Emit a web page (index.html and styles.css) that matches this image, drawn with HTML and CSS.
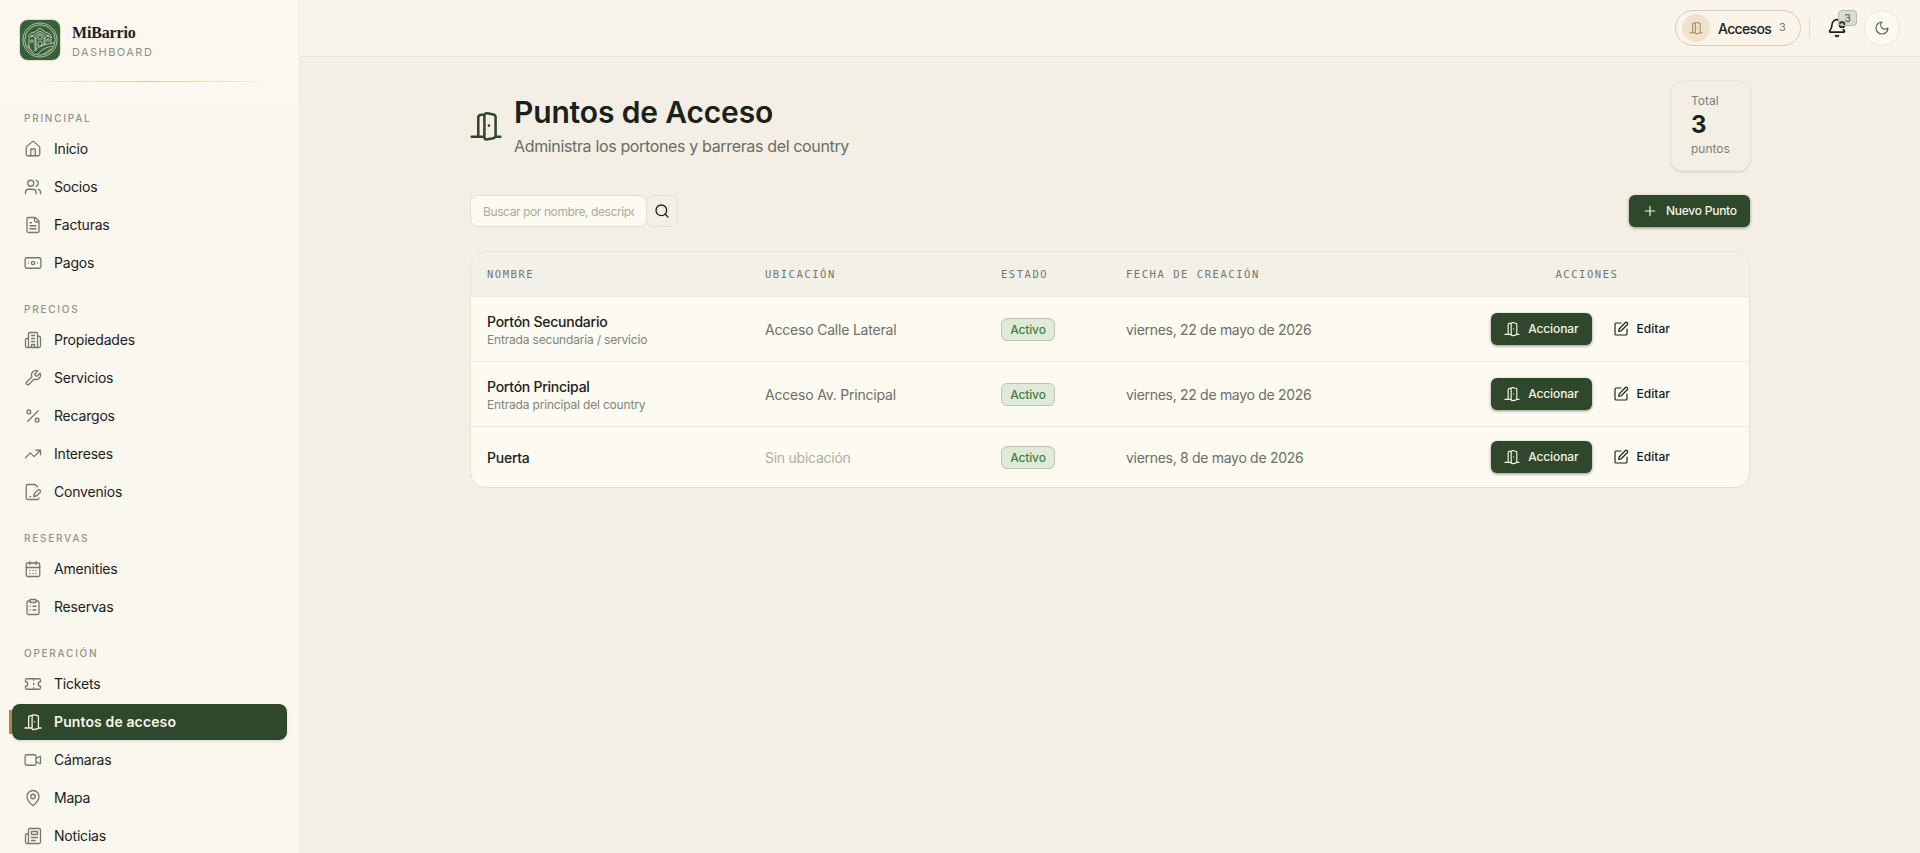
FILE: index.html
```html
<!DOCTYPE html>
<html lang="es">
<head>
<meta charset="utf-8">
<title>MiBarrio – Puntos de Acceso</title>
<link rel="stylesheet" href="styles.css">
</head>
<body>
<svg class="sprite" aria-hidden="true">
  <symbol id="door" viewBox="0 0 24 24"><path d="M1.3 20h9.4M19.2 20h3.5M6.2 20V6c0-1.600.8-2.500 2.400-2.500h2M10.800 20.600V4.300c0-1.300.9-2 2.200-1.800l4.500.8c1.100.2 1.700.9 1.700 2V19.200c0 1-.6 1.700-1.600 1.900l-4.600.9c-1.300.2-2.200-.3-2.200-1.400zM14.200 11.700v.1"/></symbol>
  <symbol id="home" viewBox="0 0 24 24"><path d="M15 21v-8a1 1 0 0 0-1-1h-4a1 1 0 0 0-1 1v8"/><path d="M3 10a2 2 0 0 1 .7-1.500l7-6a2 2 0 0 1 2.600 0l7 6A2 2 0 0 1 21 10v9a2 2 0 0 1-2 2H5a2 2 0 0 1-2-2z"/></symbol>
  <symbol id="users" viewBox="0 0 24 24"><path d="M16 21v-2a4 4 0 0 0-4-4H6a4 4 0 0 0-4 4v2M22 21v-2a4 4 0 0 0-3-3.870M16 3.130a4 4 0 0 1 0 7.750"/><circle cx="9" cy="7" r="4"/></symbol>
  <symbol id="file" viewBox="0 0 24 24"><path d="M15 2H6a2 2 0 0 0-2 2v16a2 2 0 0 0 2 2h12a2 2 0 0 0 2-2V7zM14 2v4a2 2 0 0 0 2 2h4M10 9H8M16 13H8M16 17H8"/></symbol>
  <symbol id="cash" viewBox="0 0 24 24"><rect x="1.500" y="5" width="21" height="14" rx="2"/><circle cx="12" cy="12" r="2.200"/><path d="M6 12h.01M18 12h.01"/></symbol>
  <symbol id="building" viewBox="0 0 24 24"><path d="M6 22V4a2 2 0 0 1 2-2h8a2 2 0 0 1 2 2v18zM6 10H4a2 2 0 0 0-2 2v8a2 2 0 0 0 2 2h2M18 7h2a2 2 0 0 1 2 2v11a2 2 0 0 1-2 2h-2M10 6h4M10 10h4M10 14h4M10 22v-4h4v4"/></symbol>
  <symbol id="wrench" viewBox="0 0 24 24"><path d="M14.700 6.300a1 1 0 0 0 0 1.400l1.600 1.600a1 1 0 0 0 1.400 0l3.770-3.770a6 6 0 0 1-7.940 7.940l-6.910 6.910a2.120 2.120 0 0 1-3-3l6.910-6.910a6 6 0 0 1 7.940-7.940z"/></symbol>
  <symbol id="percent" viewBox="0 0 24 24"><path d="M19 5 5 19"/><circle cx="6.500" cy="6.500" r="2.500"/><circle cx="17.500" cy="17.500" r="2.500"/></symbol>
  <symbol id="trend" viewBox="0 0 24 24"><path d="m22 7-8.500 8.500-5-5L2 17M16 7h6v6"/></symbol>
  <symbol id="filepen" viewBox="0 0 24 24"><path d="m18 5-2.400-2.400A2 2 0 0 0 14.200 2H5a2 2 0 0 0-2 2v16a2 2 0 0 0 2 2h13a2 2 0 0 0 2-2M8 18h1M18.400 9.600a2 2 0 0 1 3 3L17 17l-4 1 1-4z"/></symbol>
  <symbol id="calendar" viewBox="0 0 24 24"><rect x="3" y="4" width="18" height="18" rx="2"/><path d="M8 2v4M16 2v4M3 10h18M8 14h.01M12 14h.01M16 14h.01M8 18h.01M12 18h.01M16 18h.01"/></symbol>
  <symbol id="clipboard" viewBox="0 0 24 24"><rect x="8" y="2" width="8" height="4" rx="1"/><path d="M16 4h2a2 2 0 0 1 2 2v14a2 2 0 0 1-2 2H6a2 2 0 0 1-2-2V6a2 2 0 0 1 2-2h2M12 11h4M12 16h4M8 11h.01M8 16h.01"/></symbol>
  <symbol id="ticket" viewBox="0 0 24 24"><path d="M2 9a3 3 0 0 1 0 6v2a2 2 0 0 0 2 2h16a2 2 0 0 0 2-2v-2a3 3 0 0 1 0-6V7a2 2 0 0 0-2-2H4a2 2 0 0 0-2 2zM13 5v2M13 11v2M13 17v2"/></symbol>
  <symbol id="video" viewBox="0 0 24 24"><path d="m16 10 5.200-3a.5.5 0 0 1 .8.400v9.200a.5.5 0 0 1-.8.400L16 14"/><rect x="1.500" y="5" width="14.500" height="14" rx="2"/></symbol>
  <symbol id="pin" viewBox="0 0 24 24"><path d="M20 10c0 5-5.540 10.190-7.400 11.800a1 1 0 0 1-1.200 0C9.540 20.190 4 15 4 10a8 8 0 0 1 16 0"/><circle cx="12" cy="10" r="3"/></symbol>
  <symbol id="news" viewBox="0 0 24 24"><path d="M4 22h16a2 2 0 0 0 2-2V4a2 2 0 0 0-2-2H8a2 2 0 0 0-2 2v16a2 2 0 0 1-4 0v-9a2 2 0 0 1 2-2h2M18 14h-8M15 18h-5M10 6h8v4h-8z"/></symbol>
  <symbol id="bell" viewBox="0 0 24 24"><path d="M10.300 21a1.940 1.940 0 0 0 3.400 0M13.900 2.300A6 6 0 0 0 6 8c0 4.500-1.410 5.960-2.740 7.330A1 1 0 0 0 4 17h16a1 1 0 0 0 .74-1.670c-.4-.4-.8-.9-1.200-1.400"/><circle cx="18" cy="8" r="3"/></symbol>
  <symbol id="moon" viewBox="0 0 24 24"><path d="M12 3a6 6 0 0 0 9 9 9 9 0 1 1-9-9"/></symbol>
  <symbol id="search" viewBox="0 0 24 24"><circle cx="11" cy="11" r="8"/><path d="m21 21-4.300-4.300"/></symbol>
  <symbol id="plus" viewBox="0 0 24 24"><path d="M5 12h14M12 5v14"/></symbol>
  <symbol id="edit" viewBox="0 0 24 24"><path d="M12 3H5a2 2 0 0 0-2 2v14a2 2 0 0 0 2 2h14a2 2 0 0 0 2-2v-7M18.400 2.600a2.100 2.100 0 0 1 3 3L12.400 14.600 8.500 15.500l.9-3.900z"/></symbol>
</svg>

<div class="app">
  <aside class="sidebar">
    <div class="brand">
      <svg class="logo" viewBox="0 0 40 40"><circle cx="20" cy="20" r="17"/><circle cx="20" cy="20" r="15.200"/><path d="M8 17l3-4 4-1 5-4 5 4 5 2 2 4M11 17l9-6 9 6M16 31V16l4-3 4 3v9M9 28V18l3-3 3 3v11M25 25v-7l3-3 3 3v5M18 19v-2a2 2 0 0 1 4 0v2zM18 26v-3a2 2 0 0 1 4 0v3zM11 23v-3h2v3M27 22v-3h2v3M13 32c4-5 11-8 21-9M18 34c3-4 8-7 15-8M24 34c2-2 5-4 8-5M7 25l5 6"/></svg>
      <div class="brand-text"><span class="brand-name">MiBarrio</span><span class="brand-sub">DASHBOARD</span></div>
    </div>
    <nav class="nav">
      <section class="group"><h2 class="group-title">PRINCIPAL</h2>
        <a class="item"><svg class="icon"><use href="#home"/></svg><span>Inicio</span></a>
        <a class="item"><svg class="icon"><use href="#users"/></svg><span>Socios</span></a>
        <a class="item"><svg class="icon"><use href="#file"/></svg><span>Facturas</span></a>
        <a class="item"><svg class="icon"><use href="#cash"/></svg><span>Pagos</span></a>
      </section>
      <section class="group"><h2 class="group-title">PRECIOS</h2>
        <a class="item"><svg class="icon"><use href="#building"/></svg><span>Propiedades</span></a>
        <a class="item"><svg class="icon"><use href="#wrench"/></svg><span>Servicios</span></a>
        <a class="item"><svg class="icon"><use href="#percent"/></svg><span>Recargos</span></a>
        <a class="item"><svg class="icon"><use href="#trend"/></svg><span>Intereses</span></a>
        <a class="item"><svg class="icon"><use href="#filepen"/></svg><span>Convenios</span></a>
      </section>
      <section class="group"><h2 class="group-title">RESERVAS</h2>
        <a class="item"><svg class="icon"><use href="#calendar"/></svg><span>Amenities</span></a>
        <a class="item"><svg class="icon"><use href="#clipboard"/></svg><span>Reservas</span></a>
      </section>
      <section class="group"><h2 class="group-title">OPERACIÓN</h2>
        <a class="item"><svg class="icon"><use href="#ticket"/></svg><span>Tickets</span></a>
        <a class="item active"><svg class="icon"><use href="#door"/></svg><span>Puntos de acceso</span></a>
        <a class="item"><svg class="icon"><use href="#video"/></svg><span>Cámaras</span></a>
        <a class="item"><svg class="icon"><use href="#pin"/></svg><span>Mapa</span></a>
        <a class="item"><svg class="icon"><use href="#news"/></svg><span>Noticias</span></a>
      </section>
    </nav>
  </aside>

  <div class="content">
    <header class="topbar">
      <div class="pill"><span class="pill-icon"><svg class="icon"><use href="#door"/></svg></span><span class="pill-label">Accesos</span><span class="pill-count">3</span></div>
      <span class="divider"></span>
      <div class="bell"><svg class="icon"><use href="#bell"/></svg><span class="bell-badge">3</span></div>
      <div class="theme"><svg class="icon"><use href="#moon"/></svg></div>
    </header>

    <main class="main">
      <div class="page-head">
        <div class="heading">
          <svg class="icon heading-icon"><use href="#door"/></svg>
          <div><h1 class="title">Puntos de Acceso</h1><p class="subtitle">Administra los portones y barreras del country</p></div>
        </div>
        <div class="total"><span>Total</span><strong>3</strong><span>puntos</span></div>
      </div>

      <div class="toolbar">
        <div class="search"><input class="search-input" type="text" placeholder="Buscar por nombre, descripción"><button class="search-btn"><svg class="icon"><use href="#search"/></svg></button></div>
        <button class="btn primary new"><svg class="icon"><use href="#plus"/></svg><span>Nuevo Punto</span></button>
      </div>

      <div class="table">
        <div class="row head"><div>NOMBRE</div><div>UBICACIÓN</div><div>ESTADO</div><div>FECHA DE CREACIÓN</div><div class="center">ACCIONES</div></div>
        <div class="row">
          <div><p class="name">Portón Secundario</p><p class="desc">Entrada secundaria / servicio</p></div>
          <div class="muted">Acceso Calle Lateral</div><div><span class="badge">Activo</span></div><div class="muted date">viernes, 22 de mayo de 2026</div>
          <div class="actions"><button class="btn primary"><svg class="icon"><use href="#door"/></svg><span>Accionar</span></button><button class="btn ghost"><svg class="icon"><use href="#edit"/></svg><span>Editar</span></button></div>
        </div>
        <div class="row">
          <div><p class="name">Portón Principal</p><p class="desc">Entrada principal del country</p></div>
          <div class="muted">Acceso Av. Principal</div><div><span class="badge">Activo</span></div><div class="muted date">viernes, 22 de mayo de 2026</div>
          <div class="actions"><button class="btn primary"><svg class="icon"><use href="#door"/></svg><span>Accionar</span></button><button class="btn ghost"><svg class="icon"><use href="#edit"/></svg><span>Editar</span></button></div>
        </div>
        <div class="row short">
          <div><p class="name">Puerta</p></div>
          <div class="faint">Sin ubicación</div><div><span class="badge">Activo</span></div><div class="muted date">viernes, 8 de mayo de 2026</div>
          <div class="actions"><button class="btn primary"><svg class="icon"><use href="#door"/></svg><span>Accionar</span></button><button class="btn ghost"><svg class="icon"><use href="#edit"/></svg><span>Editar</span></button></div>
        </div>
      </div>
    </main>
  </div>
</div>
</body>
</html>
```
FILE: styles.css
```css
* { box-sizing: border-box; margin: 0; padding: 0; }
body { font-family: Inter, "Liberation Sans", sans-serif; font-size: 14px; color: #1a211a; background: #f3efe4; }
button, input { font: inherit; color: inherit; border: 0; background: none; }
.sprite { position: absolute; width: 0; height: 0; }
.icon { display: block; flex: none; width: 18px; height: 18px; fill: none; stroke: currentColor; stroke-width: 1.75; stroke-linecap: round; stroke-linejoin: round; }
.app { display: flex; height: 853px; overflow: hidden; }

/* Sidebar */
.sidebar { flex: none; width: 300px; border-right: 1px solid #eeeae0; background: #faf7ef; overflow: hidden; }
.brand { display: flex; gap: 12px; height: 102px; padding: 20px 20px 0; background: linear-gradient(90deg, transparent, #d3cb9f 50%, transparent) 24px 81px / 252px 1px no-repeat, #fdf8ef; }
.logo { flex: none; width: 40px; height: 40px; border-radius: 8px; background: #38613a; box-shadow: 0 0 0 1px #e6dcc6; fill: none; stroke: #d3dfcd; stroke-width: .8; }
.brand-text { display: flex; flex-direction: column; padding-top: 3px; }
.brand-name { font: bold 16px/20px "Liberation Serif", serif; letter-spacing: -.15px; }
.brand-sub { margin-top: 1px; font-size: 11px; line-height: 16px; letter-spacing: 1.45px; color: #8d9088; }
.nav { display: flex; flex-direction: column; gap: 18px; padding: 6px 12px 0; }
.group { display: flex; flex-direction: column; gap: 2px; }
.group-title { height: 21px; padding: 0 12px; font-size: 10px; line-height: 20px; font-weight: 500; letter-spacing: 1.75px; color: #90938a; }
.item { position: relative; display: flex; align-items: center; gap: 12px; height: 36px; padding: 0 12px; letter-spacing: -.2px; }
.item span { padding-bottom: 1px; }
.item .icon { color: #74786f; }
.item.active { color: #fbf6e9; background: #2f472b; border-radius: 8px; font-weight: 600; letter-spacing: .12px; box-shadow: 0 1px 3px #1c2a1a30; }
.item.active .icon { color: #fbf6e9; }
.item.active::before { content: ""; position: absolute; left: -3px; top: 6px; width: 3px; height: 24px; background: #aa864d; }

/* Top bar */
.content { flex: 1; }
.topbar { display: flex; align-items: center; justify-content: flex-end; height: 57px; padding-right: 20px; background: #f9f5ec; border-bottom: 1px solid #ebe6da; }
.pill { display: flex; align-items: center; width: 126px; height: 36px; padding-left: 6px; border: 1px solid #dccbaa; border-radius: 18px; background: #fbf4e8; }
.pill-icon { display: grid; place-items: center; width: 28px; height: 28px; border-radius: 50%; background: #eee3d1; color: #aa864d; }
.pill-icon .icon { width: 14px; height: 14px; }
.pill-label { margin-left: 8px; width: 54px; font-weight: 500; letter-spacing: -.65px; }
.pill-count { margin: -3px 0 0 7px; font-size: 11px; color: #74786f; }
.divider { width: 1px; height: 20px; margin-left: 8px; background: #e2dccf; }
.bell { position: relative; margin-left: 17px; }
.bell .icon { width: 20px; height: 20px; stroke-width: 2; }
.bell-badge { position: absolute; left: 11px; top: -8px; width: 19px; height: 16px; border: 1px solid #b2bcaa; border-radius: 4px; background: #2f472b26; font-size: 10px; line-height: 15px; text-align: center; color: #39503a; }
.theme { display: grid; place-items: center; width: 36px; height: 36px; margin-left: 17px; border: 1px solid #e8e4d9; border-radius: 50%; background: #fcf9f1; color: #5a6057; }
.theme .icon { width: 16px; height: 16px; }

/* Page */
.main { width: 1280px; margin: 0 auto; padding-top: 24px; }
.page-head { display: flex; justify-content: space-between; height: 90px; }
.heading { display: flex; align-items: center; gap: 12px; }
.heading-icon { width: 32px; height: 32px; color: #2f472b; stroke-width: 1.9; }
.title { font-size: 30px; line-height: 36px; font-weight: 600; letter-spacing: -.15px; }
.subtitle { margin-top: 4px; font-size: 16px; line-height: 24px; letter-spacing: -.35px; color: #686d64; }
.total { display: flex; flex-direction: column; width: 79px; height: 90px; padding: 11px 19px; border-radius: 12px; border: 1px solid #eeeadf; box-shadow: 0 1px 3px #3c412d30; color: #7f8279; font-size: 12px; line-height: 16px; }
.total strong { font-size: 24px; line-height: 32px; color: #1a211a; }
.toolbar { display: flex; justify-content: space-between; margin-top: 24px; }
.search { display: flex; }
.search-input { width: 177px; height: 32px; padding: 0 12px; border: 1px solid #e2dfd2; border-radius: 8px; background: #fdfaf0; font-size: 12px; letter-spacing: -.4px; }
.search-input::placeholder { color: #aaaba0; opacity: 1; }
.search-btn { display: grid; place-items: center; width: 32px; height: 32px; margin-left: -1px; border: 1px solid #e4e0d3; border-radius: 8px; }
.search-btn .icon { width: 16px; height: 16px; stroke-width: 2; }
.btn { display: flex; align-items: center; gap: 8px; height: 32px; padding: 0 13px; border-radius: 6px; font-size: 12px; font-weight: 500; white-space: nowrap; }
.btn .icon { width: 16px; height: 16px; }
.btn span { padding-bottom: 1px; }
.primary { color: #f8f3e6; background: #2f472b; box-shadow: 0 1px 3px #1c2a1a80; letter-spacing: -.1px; }
.new { width: 121px; letter-spacing: -.25px; }

/* Table */
.table { margin-top: 24px; border: 1px solid #e6e2d5; border-radius: 16px; overflow: hidden; background: #fdfaf1; }
.row { display: grid; grid-template-columns: 278px 236px 125px 315px 324px; align-items: center; height: 65px; border-bottom: 1px solid #ece9df; }
.row > div { padding: 0 16px; }
.row > .actions { display: flex; justify-content: center; gap: 8px; padding-bottom: 1px; }
.row:last-child { border-bottom: 0; }
.short { height: 60px; }
.head { height: 45px; background: #f3f0e7; font-family: "DejaVu Sans Mono", monospace; font-size: 10.5px; letter-spacing: 1.55px; color: #74776e; }
.center { text-align: center; }
.name { padding-top: 1px; line-height: 20px; font-weight: 500; letter-spacing: -.25px; }
.desc { font-size: 12px; line-height: 16px; letter-spacing: -.18px; color: #81847b; }
.muted { color: #6b6f66; letter-spacing: -.2px; }
.date { letter-spacing: -.3px; }
.faint { color: #adaea5; letter-spacing: -.25px; }
.badge { display: inline-block; width: 54px; height: 23px; border: 1px solid #b3cba9; border-radius: 6px; background: #e1ead8; color: #417e43; font-size: 12px; font-weight: 500; line-height: 21px; text-align: center; letter-spacing: -.15px; }
```
